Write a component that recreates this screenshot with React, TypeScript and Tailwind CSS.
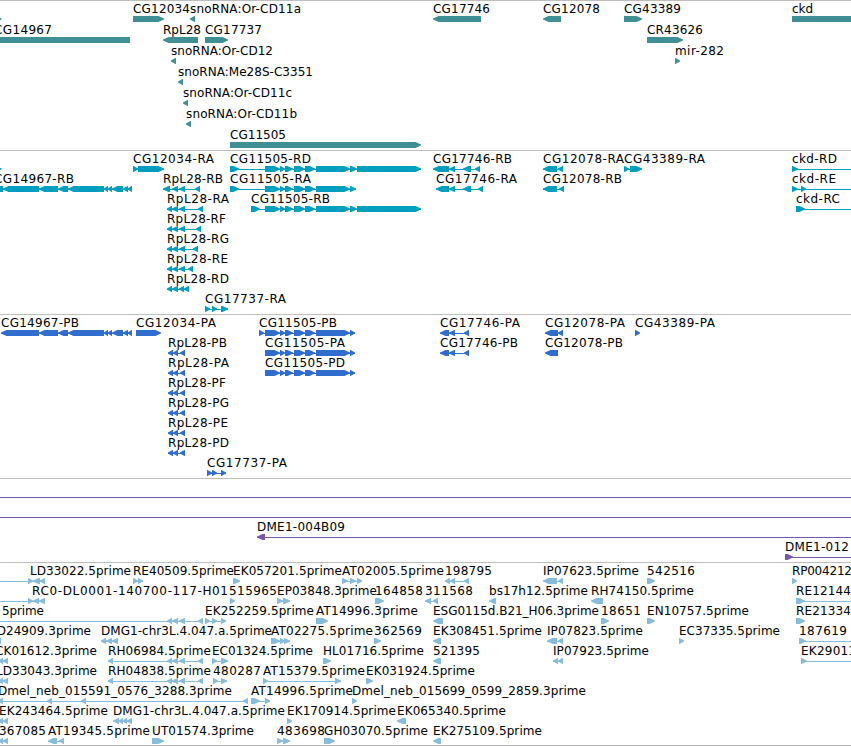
type Strand = '+' | '-';

interface Feature {
  row: number;
  label?: string;
  // label start and end
  text?: [number, number];
  strand: Strand;
  blocks: [number, number][];
  // intron line, when it runs past the blocks
  line?: [number, number];
}

const f = (
  row: number,
  label: string,
  start: number,
  end: number,
  strand: Strand,
  blocks: [number, number][],
  line?: [number, number],
): Feature => ({ row, label, text: [start, end], strand, blocks, line });

const genes: Feature[] = [
  { row: 0, strand: '+', blocks: [[-5, 1.5]] },
  f(0, 'CG12034', 133, 190, '+', [[133, 164]]),
  f(0, 'snoRNA:Or-CD11a', 190, 301, '-', [[190, 195]]),
  f(0, 'CG17746', 433, 490, '-', [[433, 481]]),
  f(0, 'CG12078', 543, 600, '-', [[543, 561]]),
  f(0, 'CG43389', 624, 681, '+', [[624, 642]]),
  f(0, 'ckd', 792, 813, '+', [[792, 870]]),
  f(1, 'CG14967', -6, 52, '-', [[-20, 130]]),
  f(1, 'RpL28', 163, 201, '-', [[163, 198]]),
  f(1, 'CG17737', 205, 262, '+', [[205, 228]]),
  f(1, 'CR43626', 647, 703, '+', [[647, 683]]),
  f(2, 'snoRNA:Or-CD12', 171, 273, '-', [[171, 176]]),
  f(2, 'mir-282', 675, 724, '+', [[675, 680]]),
  f(3, 'snoRNA:Me28S-C3351', 178, 313, '-', [[178, 183]]),
  f(4, 'snoRNA:Or-CD11c', 183, 292, '-', [[183, 188]]),
  f(5, 'snoRNA:Or-CD11b', 186, 297, '-', [[186, 191]]),
  f(6, 'CG11505', 230, 286, '+', [[230, 421]]),
];

const cg11505: [number, number][] = [[265, 280], [280, 285], [285, 293], [294, 305], [305, 315], [316, 350]];
const cg14967: [number, number][] = [[39, 58], [58, 68], [68, 104], [104, 108], [108, 112], [112, 123], [123, 128], [128, 132]];
const rpl28: [number, number][] = [[167, 172], [172, 178], [179, 185]];
const rpl28Cds: [number, number][] = [[168, 173], [173, 178], [180, 185]];

const transcripts: Feature[] = [
  { row: 0, strand: '+', blocks: [[-5, 1.5]] },
  f(0, 'CG12034-RA', 133, 214, '+', [[133, 138], [138, 164]]),
  f(0, 'CG11505-RD', 230, 311, '+', [[230, 239], ...cg11505, [350, 357], [357, 421]]),
  f(0, 'CG17746-RB', 433, 512, '-', [[433, 449], [449, 455], [463, 471], [475, 480]]),
  f(0, 'CG12078-RA', 543, 624, '-', [[543, 557], [558, 563]]),
  f(0, 'CG43389-RA', 624, 705, '+', [[624, 629], [630, 642]]),
  f(0, 'ckd-RD', 792, 837, '+', [[792, 798]], [792, 851]),
  f(1, 'CG14967-RB', -6, 74, '-', [[-8, 3], [3, 39], ...cg14967]),
  f(1, 'RpL28-RB', 163, 223, '-', [[163, 170], [172, 178], [179, 185], [195, 200]]),
  f(1, 'CG11505-RA', 230, 311, '+', [[230, 239], ...cg11505, [350, 356]]),
  f(1, 'CG17746-RA', 436, 517, '-', [[436, 449], [449, 455], [463, 471], [478, 483]]),
  f(1, 'CG12078-RB', 543, 622, '-', [[543, 557], [559, 564]]),
  f(1, 'ckd-RE', 792, 836, '+', [[792, 798], [801, 806]], [792, 851]),
  f(2, 'RpL28-RA', 167, 229, '-', [...rpl28, [198, 203]]),
  f(2, 'CG11505-RB', 251, 330, '+', [[251, 260], ...cg11505, [350, 357], [357, 421]]),
  f(2, 'ckd-RC', 796, 840, '+', [[796, 805]], [796, 851]),
  f(3, 'RpL28-RF', 167, 226, '-', [...rpl28, [196, 201]]),
  f(4, 'RpL28-RG', 167, 229, '-', [...rpl28, [193, 198]]),
  f(5, 'RpL28-RE', 167, 228, '-', [...rpl28, [188, 193]]),
  f(6, 'RpL28-RD', 167, 229, '-', [[167, 172], [172, 178], [179, 184], [184, 189]]),
  f(7, 'CG17737-RA', 205, 286, '+', [[205, 210], [212, 217], [221, 228]]),
];

const proteins: Feature[] = [
  f(0, 'CG14967-PB', 1, 79, '-', [[1, 39], ...cg14967]),
  f(0, 'CG12034-PA', 136, 216, '+', [[136, 161]]),
  f(0, 'CG11505-PB', 259, 337, '+', [[259, 264], ...cg11505, [350, 355]]),
  f(0, 'CG17746-PA', 440, 520, '-', [[440, 449], [449, 455], [464, 469]]),
  f(0, 'CG12078-PA', 545, 625, '-', [[545, 558], [558, 563]]),
  f(0, 'CG43389-PA', 635, 715, '+', [[635, 640]]),
  f(1, 'RpL28-PB', 168, 227, '-', rpl28Cds),
  f(1, 'CG11505-PA', 265, 345, '+', [...cg11505, [350, 355]]),
  f(1, 'CG17746-PB', 440, 518, '-', [[440, 449], [449, 455], [464, 469]]),
  f(1, 'CG12078-PB', 545, 623, '-', [[545, 558]]),
  f(2, 'RpL28-PA', 168, 229, '-', rpl28Cds),
  f(2, 'CG11505-PD', 265, 345, '+', [...cg11505, [350, 355]]),
  f(3, 'RpL28-PF', 168, 226, '-', rpl28Cds),
  f(4, 'RpL28-PG', 168, 229, '-', rpl28Cds),
  f(5, 'RpL28-PE', 168, 228, '-', rpl28Cds),
  f(6, 'RpL28-PD', 168, 229, '-', rpl28Cds),
  f(7, 'CG17737-PA', 207, 287, '+', [[207, 212], [212, 217], [221, 226]]),
];

const insertions: Feature[] = [
  { row: 0, strand: '+', blocks: [], line: [0, 851] },
  { row: 1, strand: '+', blocks: [], line: [0, 851] },
  f(2, 'DME1-004B09', 257, 345, '-', [[257, 265]], [257, 851]),
  f(3, 'DME1-012', 785, 849, '+', [[785, 793]], [785, 851]),
];

const ests: Feature[] = [
  f(0, 'LD33022.5prime', 30, 131, '-', [[33, 40], [40, 45]], [0, 45]),
  { row: 0, strand: '+', blocks: [[28, 33]] },
  f(0, 'RE40509.5prime', 133, 234, '+', [[133, 138], [138, 143]]),
  f(0, 'EK057201.5prime', 233, 342, '+', [[233, 240]]),
  f(0, 'AT02005.5prime', 342, 444, '+', [[342, 348], [350, 356], [357, 362]]),
  f(0, '198795', 445, 492, '-', [[445, 450], [450, 455], [464, 469]]),
  f(0, 'IP07623.5prime', 543, 639, '-', [[543, 557], [558, 563]]),
  f(0, '542516', 647, 695, '+', [[647, 655]]),
  f(0, 'RP004212', 792, 852, '+', [[792, 797]]),
  f(1, 'RC0-DL0001-140700-117-H01', 32, 228, '-', [[33, 39], [39, 45]], [0, 45]),
  { row: 1, strand: '+', blocks: [[28, 33]] },
  f(1, '515965', 229, 277, '+', [[230, 235]]),
  f(1, 'EP03848.3prime', 277, 377, '+', [[277, 283], [283, 290]]),
  f(1, '164858', 375, 423, '+', [[375, 384]]),
  f(1, '311568', 425, 473, '-', [[425, 431], [433, 438]]),
  f(1, 'bs17h12.5prime', 489, 588, '-', [[489, 496]]),
  f(1, 'RH74150.5prime', 591, 694, '-', [[591, 603]]),
  f(1, 'RE12144', 796, 851, '+', [[796, 805]], [796, 851]),
  f(2, '5prime', 2, 44, '-', [...rpl28, [198, 203]], [0, 203]),
  f(2, 'EK252259.5prime', 205, 314, '+', [[205, 210], [212, 217], [221, 226]]),
  f(2, 'AT14996.3prime', 316, 418, '+', [[316, 328]]),
  f(2, 'ESG0115d.B21_H06.3prime', 433, 599, '-', [[433, 443]]),
  f(2, '18651', 601, 641, '+', [[601, 609]]),
  f(2, 'EN10757.5prime', 647, 749, '+', [[647, 655]]),
  f(2, 'RE21334', 796, 851, '+', [[796, 805]]),
  f(3, 'LD24909.3prime', -10, 91, '-', [[-4, 1]]),
  f(3, 'DMG1-chr3L.4.047.a.5prime', 101, 272, '-', [[101, 106], [106, 112], [112, 118]]),
  f(3, 'AT02275.5prime', 271, 373, '+', [[271, 280], [280, 285], [284, 290]]),
  f(3, '362569', 374, 422, '+', [[374, 381]]),
  f(3, 'EK308451.5prime', 433, 542, '-', [[433, 441]]),
  f(3, 'IP07823.5prime', 547, 643, '-', [[547, 557], [558, 563]]),
  f(3, 'EC37335.5prime', 679, 780, '+', [[679, 684]]),
  f(3, '187619', 799, 847, '+', [[799, 806]], [799, 851]),
  f(4, 'CK01612.3prime', -5, 97, '-', [[-2, 3], [3, 8]]),
  f(4, 'RH06984.5prime', 108, 211, '-', [[108, 113], ...rpl28, [198, 203]]),
  f(4, 'EC01324.5prime', 212, 313, '+', [[212, 217], [221, 228]]),
  f(4, 'HL01716.5prime', 323, 424, '+', [[323, 331]]),
  f(4, '521395', 433, 480, '-', [[433, 441]]),
  f(4, 'IP07923.5prime', 553, 649, '-', [[553, 558], [558, 563]]),
  f(4, 'EK29011', 801, 856, '+', [[801, 807]], [801, 851]),
  f(5, 'LD33043.3prime', -4, 97, '-', [[-2, 3], [3, 8]]),
  f(5, 'RH04838.5prime', 108, 211, '-', [[108, 113], ...rpl28, [198, 203]]),
  f(5, '480287', 213, 261, '+', [[213, 218], [221, 227]]),
  f(5, 'AT15379.5prime', 263, 365, '+', [[263, 268], [335, 341]]),
  f(5, 'EK031924.5prime', 366, 475, '+', [[366, 373]]),
  f(6, 'Dmel_neb_015591_0576_3288.3prime', -2, 232, '-', [[-3, 3], [47, 52], [81, 86], [243, 248]]),
  f(6, 'AT14996.5prime', 251, 353, '+', [[251, 260], [265, 270]]),
  f(6, 'Dmel_neb_015699_0599_2859.3prime', 352, 586, '+', [[352, 357]]),
  f(7, 'EK243464.5prime', -1, 108, '-', [[-2, 3], [3, 8]]),
  f(7, 'DMG1-chr3L.4.047.a.5prime', 113, 285, '-', [[113, 119], [119, 123], [123, 127], [127, 132]]),
  f(7, 'EK170914.5prime', 287, 396, '+', [[287, 292]]),
  f(7, 'EK065340.5prime', 397, 506, '-', [[397, 406]]),
  f(8, '367085', -1, 46, '-', [[-2, 3], [3, 8]]),
  f(8, 'AT19345.5prime', 48, 150, '-', [[48, 57], [59, 64]]),
  f(8, 'UT01574.3prime', 152, 254, '+', [[152, 164]]),
  f(8, '483698', 277, 325, '+', [[277, 283], [283, 290]]),
  f(8, 'GH03070.5prime', 324, 428, '+', [[324, 335]]),
  f(8, 'EK275109.5prime', 433, 542, '-', [[433, 441]]),
];

function arrow([a, b]: [number, number], top: number, strand: Strand) {
  const head = Math.min(b - a, 6);
  const mid = top + 3;
  const bottom = top + 6;
  return strand === '+'
    ? `M${a} ${top}H${b - head + 0.5}L${b} ${mid - 0.5}V${mid + 0.5}L${b - head + 0.5} ${bottom}H${a}Z`
    : `M${b} ${top}H${a + head - 0.5}L${a} ${mid - 0.5}V${mid + 0.5}L${a + head - 0.5} ${bottom}H${b}Z`;
}

function Track({ features, pitch = 20, className }: { features: Feature[]; pitch?: number; className: string }) {
  return (
    <section className={`shrink-0 border-t border-[#bebebe] ${className}`}>
      <svg className="block h-full w-full overflow-hidden" fill="currentColor">
        {features.map((item, i) => {
          const y = item.row * pitch;
          const first = item.blocks[0];
          const last = item.blocks[item.blocks.length - 1];
          const line = item.line ?? (item.blocks.length > 1 ? [first[0], last[1]] : null);
          return (
            <g key={i}>
              {line && <rect x={line[0]} y={y + 18} width={line[1] - line[0]} height={1} />}
              {item.blocks.map((b) => (
                <path key={b[0]} d={arrow(b, y + 15, item.strand)} />
              ))}
              {item.text && (
                <text
                  x={item.text[0]}
                  y={y + 12}
                  textLength={item.text[1] - item.text[0]}
                  lengthAdjust="spacing"
                  className="fill-black"
                >
                  {item.label}
                </text>
              )}
            </g>
          );
        })}
      </svg>
    </section>
  );
}

export default function App() {
  return (
    <main className="flex h-[746px] w-[851px] flex-col overflow-hidden border-b border-[#bebebe] bg-white font-['DejaVu_Sans',sans-serif] text-[12px]">
      <Track features={genes} pitch={21} className="h-[150px] text-[#408f94]" />
      <Track features={transcripts} className="h-[164px] text-[#009ebf]" />
      <Track features={proteins} className="h-[164px] text-[#306dcc]" />
      <Track features={insertions} className="h-[84px] text-[#7857aa]" />
      <Track features={ests} className="h-[183px] text-[#88bcdc]" />
    </main>
  );
}
